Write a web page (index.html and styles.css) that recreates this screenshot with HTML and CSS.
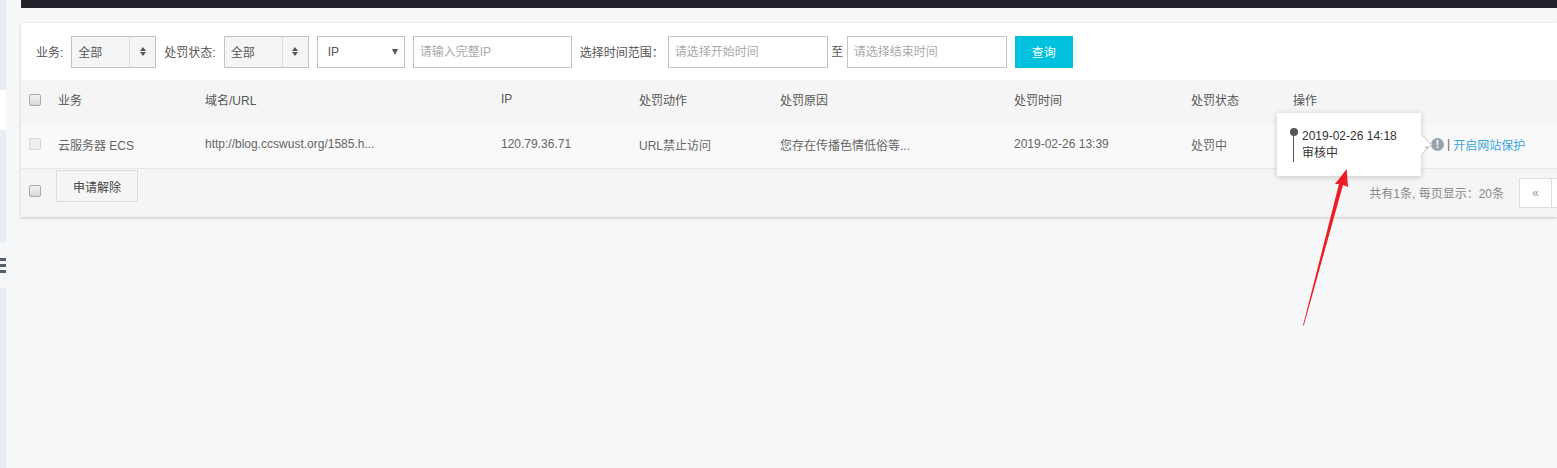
FILE: index.html
```html
<!DOCTYPE html>
<html lang="en">

<head>
    <meta charset="UTF-8">
    <title>处罚列表</title>
    <link rel="stylesheet" href="styles.css">
</head>

<body>
    <div class="page">
        <aside class="side">
            <div class="side-top"></div>
            <div class="side-white"></div>
            <div class="side-mid"></div>
            <div class="side-gap">
                <span class="bars"></span>
            </div>
            <div class="side-bottom"></div>
        </aside>

        <main class="main">
            <div class="topbar"></div>

            <div class="panel">
                <form class="filter">
                    <label class="lbl lbl-biz">业务:</label>
                    <div class="sel sel-gray">
                        <span class="sel-text">全部</span>
                        <span class="sel-arrows"><i class="up"></i><i class="down"></i></span>
                    </div>
                    <label class="lbl lbl-status">处罚状态:</label>
                    <div class="sel sel-gray">
                        <span class="sel-text">全部</span>
                        <span class="sel-arrows"><i class="up"></i><i class="down"></i></span>
                    </div>
                    <div class="sel sel-ip">
                        <span class="sel-text">IP</span>
                        <i class="down-solid"></i>
                    </div>
                    <input class="inp inp-ip" type="text" placeholder="请输入完整IP">
                    <label class="lbl lbl-range">选择时间范围：</label>
                    <input class="inp inp-time" type="text" placeholder="请选择开始时间">
                    <span class="to">至</span>
                    <input class="inp inp-time" type="text" placeholder="请选择结束时间">
                    <button class="query" type="button">查询</button>
                </form>

                <div class="row row-head">
                    <div class="c c-check"><span class="check"></span></div>
                    <div class="c c-biz">业务</div>
                    <div class="c c-url">域名/URL</div>
                    <div class="c c-ip">IP</div>
                    <div class="c c-act">处罚动作</div>
                    <div class="c c-why">处罚原因</div>
                    <div class="c c-time">处罚时间</div>
                    <div class="c c-state">处罚状态</div>
                    <div class="c">操作</div>
                </div>

                <div class="row row-body">
                    <div class="c c-check"><span class="check check-off"></span></div>
                    <div class="c c-biz">云服务器 ECS</div>
                    <div class="c c-url">http://blog.ccswust.org/1585.h...</div>
                    <div class="c c-ip">120.79.36.71</div>
                    <div class="c c-act">URL禁止访问</div>
                    <div class="c c-why">您存在传播色情低俗等...</div>
                    <div class="c c-time">2019-02-26 13:39</div>
                    <div class="c c-state">处罚中</div>
                    <div class="c c-op">
                        <span class="dot">.</span>
                        <span class="info">!</span>
                        <span class="sep">|</span>
                        <a class="link">开启网站保护</a>
                    </div>
                </div>

                <div class="row-foot">
                    <div class="c c-check"><span class="check"></span></div>
                    <button class="release" type="button">申请解除</button>
                    <div class="foot-right">
                        <span class="count">共有1条, 每页显示：20条</span>
                        <div class="pager">
                            <span class="pg">«</span>
                            <span class="pg"></span>
                        </div>
                    </div>
                </div>

                <div class="pop">
                    <div class="pop-line"></div>
                    <div class="pop-text">
                        <div class="pop-date">2019-02-26 14:18</div>
                        <div>审核中</div>
                    </div>
                    <span class="pop-tip"></span>
                </div>
            </div>
        </main>
    </div>

    <svg class="arrow" width="60" height="220" viewBox="0 0 60 220">
        <path d="M10 200.500 L46 59 L42 59 L53.700 44 L55 62 L50 60 L10.800 200.500 Z" fill="#ee1c25" />
    </svg>
</body>

</html>
```

FILE: styles.css
```css
* {
    box-sizing: border-box;
}

html,
body {
    height: 100%;
}

body {
    margin: 0;
    overflow: hidden;
    background-color: #f6f7f9;
    color: #555;
    font-family: "Liberation Sans", "Noto Sans CJK SC", sans-serif;
    font-size: 12px;
}

.page {
    display: flex;
    height: 468px;
}

.side {
    width: 6px;
    flex: none;
    display: flex;
    flex-direction: column;
}

.side-top {
    height: 90px;
    background-color: #e8ecf3;
}

.side-white {
    height: 40px;
    background-color: #fff;
}

.side-mid {
    height: 112px;
    background-color: #e8ecf3;
}

.side-gap {
    height: 46px;
    display: flex;
    align-items: center;
}

.bars {
    width: 6px;
    height: 15px;
    border-top: 3px solid #56606e;
    border-bottom: 3px solid #56606e;
    background: linear-gradient(#56606e, #56606e) 0 3px / 6px 3px no-repeat;
}

.side-bottom {
    flex: 1;
    background-color: #e8ecf3;
}

.main {
    margin-left: 15px;
    flex: 1;
    min-width: 0;
}

.topbar {
    height: 8px;
    background-color: #22232a;
}

.panel {
    position: relative;
    margin-top: 15px;
    height: 194px;
    background-color: #f5f5f5;
    box-shadow: 0 1px 3px rgba(0, 0, 0, 0.2);
}

.filter {
    display: flex;
    align-items: center;
    height: 57px;
    padding: 0 0 0 15px;
    background-color: #fff;
}

.lbl {
    white-space: nowrap;
    color: #555;
}

.lbl-biz {
    margin-right: 8px;
}

.lbl-status {
    margin: 0 8px;
}

.lbl-range {
    margin: 0 4px 0 8px;
}

.sel {
    height: 32px;
    width: 85px;
    border: 1px solid #c3c3c3;
    display: flex;
    align-items: center;
    color: #555;
}

.sel-gray {
    background-color: #f5f5f5;
}

.sel-text {
    flex: 1;
    padding-left: 6px;
}

.sel-arrows {
    width: 26px;
    height: 30px;
    border-left: 1px solid #ddd;
    display: flex;
    flex-direction: column;
    align-items: center;
    justify-content: center;
    gap: 1px;
}

.up {
    border: 3.500px solid transparent;
    border-top: 0;
    border-bottom: 4px solid #555;
}

.down {
    border: 3.500px solid transparent;
    border-bottom: 0;
    border-top: 4px solid #555;
}

.sel-ip {
    width: 88px;
    margin: 0 8px;
    background-color: #fff;
    padding-right: 6px;
}

.sel-ip .sel-text {
    padding-left: 10px;
}

.down-solid {
    border: 3px solid transparent;
    border-bottom: 0;
    border-top: 6px solid #555;
}

.inp {
    height: 32px;
    border: 1px solid #c3c3c3;
    padding: 0 6px;
    outline: none;
    font: inherit;
    background-color: #fff;
}

.inp::placeholder {
    color: #aaa;
}

.inp-ip {
    width: 159px;
}

.inp-time {
    width: 160px;
}

.to {
    width: 19px;
    text-align: center;
    margin-top: -2px;
}

.query {
    width: 58px;
    height: 32px;
    margin-left: 8px;
    border: none;
    background-color: #00c1de;
    color: #fff;
    font: inherit;
}

.row {
    display: flex;
    align-items: center;
    padding-bottom: 4px;
}

.row-head {
    height: 44px;
    padding-bottom: 6px;
    background-color: #f5f5f5;
}

.row-head .c-check {
    padding-top: 2px;
}

.row-body {
    height: 45px;
    background-color: #f9f9f9;
    border-bottom: 1px solid #e8e8e8;
    color: #666;
}

.c {
    flex: none;
    white-space: nowrap;
}

.c-check {
    width: 37px;
    padding-left: 8px;
    display: flex;
}

.check {
    width: 12px;
    height: 12px;
    border: 1px solid #aaa;
    border-radius: 2px;
    background: linear-gradient(#f2f2f2, #d8d8d8);
}

.check-off {
    border-color: #d5d5d5;
    background: #eee;
}

.c-biz {
    width: 147px;
}

.c-url {
    width: 296px;
}

.c-ip {
    width: 138px;
}

.c-act {
    width: 141px;
}

.c-why {
    width: 234px;
}

.c-time {
    width: 177px;
}

.c-state {
    width: 102px;
}

.c-op {
    display: flex;
    align-items: center;
    gap: 3px;
    padding-left: 132px;
}

.dot {
    position: relative;
    z-index: 1;
    width: 3px;
}

.info {
    width: 13px;
    height: 13px;
    border-radius: 50%;
    background-color: #98a3b1;
    color: #fff;
    font-size: 10px;
    font-weight: bold;
    line-height: 13px;
    text-align: center;
}

.sep {
    color: #666;
}

.link {
    color: #3aa6dd;
}

.row-foot {
    display: flex;
    align-items: flex-start;
    height: 48px;
}

.row-foot .c-check {
    width: 35px;
    padding-top: 16px;
}

.release {
    width: 82px;
    height: 32px;
    margin-top: 1px;
    border: 1px solid #ddd;
    background-color: #f5f5f5;
    color: #444;
    font: inherit;
}

.foot-right {
    margin-left: auto;
    display: flex;
    align-items: center;
    margin-top: 9px;
}

.count {
    color: #888;
    margin-right: 15px;
    padding-bottom: 2px;
}

.pager {
    display: flex;
    width: 38px;
    overflow: hidden;
}

.pg {
    flex: none;
    width: 33px;
    height: 30px;
    border: 1px solid #ddd;
    background-color: #fff;
    color: #999;
    line-height: 28px;
    text-align: center;
    margin-right: -1px;
}

/* popover over the op column */
.pop {
    position: absolute;
    left: 1256px;
    top: 90px;
    width: 144px;
    height: 63px;
    padding: 15px 0 0 14px;
    display: flex;
    gap: 6px;
    background-color: #fff;
    box-shadow: 0 1px 6px rgba(0, 0, 0, 0.2);
    color: #333;
    line-height: 17px;
}

.pop-line {
    position: relative;
    width: 5px;
    height: 32px;
    margin-top: 2px;
    background: linear-gradient(#555, #555) 2px 0 / 1px 100% no-repeat;
}

.pop-line::before {
    content: "";
    position: absolute;
    left: -1px;
    top: -2px;
    width: 8px;
    height: 8px;
    border-radius: 50%;
    background-color: #555;
}

.pop-tip {
    position: absolute;
    right: -8px;
    top: 24px;
    width: 15px;
    height: 15px;
    transform: rotate(45deg);
    background-color: #fff;
    border-top: 1px solid #ccc;
    border-right: 1px solid #ccc;
}

.arrow {
    position: absolute;
    left: 1293px;
    top: 125px;
}
```
